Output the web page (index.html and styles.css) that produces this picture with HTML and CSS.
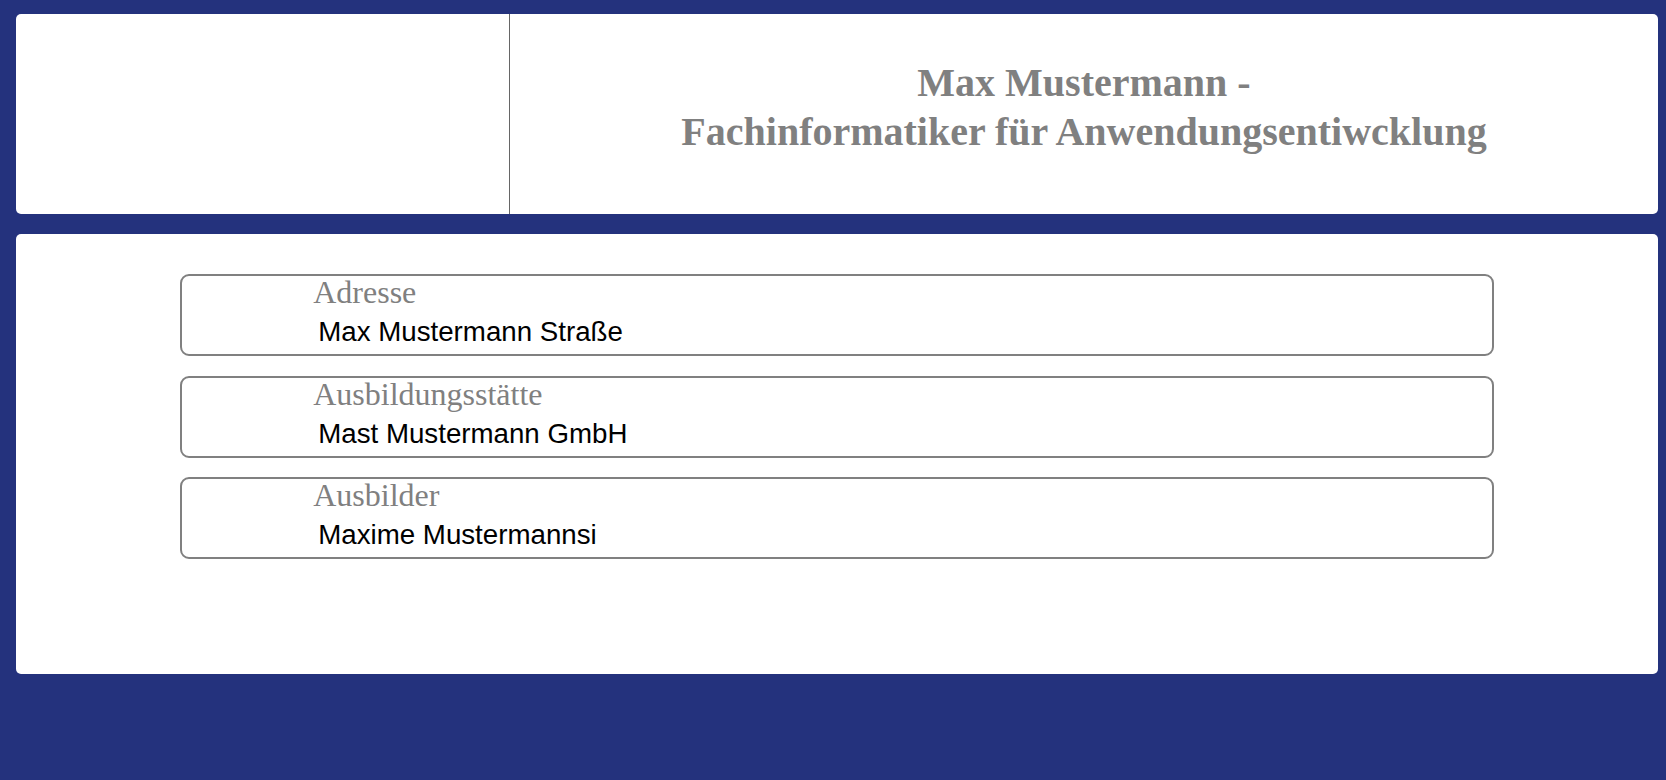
FILE: index.html
```html
<!DOCTYPE html>
<html lang="de">
<head>
<meta charset="utf-8">
<title>Max Mustermann</title>
<link rel="stylesheet" href="styles.css">
</head>
<body>
<header class="card header">
  <div class="header-left"></div>
  <div class="header-right">
    <h1 class="title">Max Mustermann -<br>Fachinformatiker für Anwendungsentiwcklung</h1>
  </div>
</header>
<main class="card content">
  <div class="field">
    <div class="field-label">Adresse</div>
    <div class="field-value">Max Mustermann Straße</div>
  </div>
  <div class="field">
    <div class="field-label">Ausbildungsstätte</div>
    <div class="field-value">Mast Mustermann GmbH</div>
  </div>
  <div class="field">
    <div class="field-label">Ausbilder</div>
    <div class="field-value">Maxime Mustermannsi</div>
  </div>
</main>
</body>
</html>
```
FILE: styles.css
```css
html, body {
  margin: 0;
  height: 100%;
}
body {
  background: #24327d;
  padding: 14px 8px 0 16px;
  box-sizing: border-box;
  display: flex;
  flex-direction: column;
  gap: 20px;
  font-family: "Liberation Serif", "Times New Roman", serif;
}
.card {
  background: #ffffff;
  border-radius: 5px;
}
.header {
  height: 200px;
  flex: none;
  display: flex;
}
.header-left {
  width: 493px;
  border-right: 1px solid #666666;
}
.header-right {
  flex: 1;
  display: flex;
  justify-content: center;
  padding-top: 44px;
}
.title {
  margin: 0;
  font-size: 40px;
  font-weight: bold;
  line-height: 49px;
  color: #808080;
  text-align: center;
}
.content {
  height: 440px;
  flex: none;
  box-sizing: border-box;
  padding-top: 40px;
  display: flex;
  flex-direction: column;
  align-items: center;
  gap: 19.5px;
}
.field {
  width: 80%;
  box-sizing: border-box;
  border: 2px solid #808080;
  border-radius: 9px;
  padding: 2px 0 6px 131px;
}
.field-label {
  font-family: "Liberation Serif", "Times New Roman", serif;
  font-size: 32px;
  line-height: 28px;
  color: #808080;
}
.field-value {
  margin-top: 10px;
  padding-left: 5px;
  font-family: "Liberation Sans", Arial, sans-serif;
  font-size: 27.7px;
  line-height: 32px;
  color: #000000;
}
```
